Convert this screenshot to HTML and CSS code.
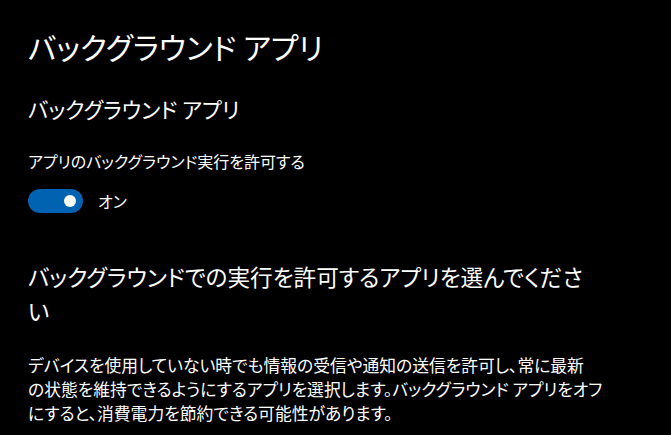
FILE: index.html
```html
<!DOCTYPE html>
<html lang="ja">
<head>
<meta charset="utf-8">
<link rel="stylesheet" href="styles.css">
</head>
<body>
<main class="page">
  <h1 class="page-title">バックグラウンド アプリ</h1>
  <h2 class="section-title">バックグラウンド アプリ</h2>
  <p class="setting-label">アプリのバックグラウンド実行を許可する</p>
  <div class="toggle-row">
    <span class="toggle"><span class="knob"></span></span>
    <span class="toggle-text">オン</span>
  </div>
  <h3 class="group-title">バックグラウンドでの実行を許可するアプリを選んでください</h3>
  <p class="description">デバイスを使用していない時でも情報の受信や通知の送信を許可し、常に最新<br>の状態を維持できるようにするアプリを選択します。バックグラウンド アプリをオフ<br>にすると、消費電力を節約できる可能性があります。</p>
</main>
</body>
</html>
```
FILE: styles.css
```css
html, body {
  margin: 0;
  padding: 0;
  background: #000;
}
body {
  color: #fff;
  font-family: "Noto Sans CJK JP", "Noto Sans", sans-serif;
  font-feature-settings: "palt";
}
.page {
  padding: 26px 0 0 28px;
  display: flex;
  flex-direction: column;
  align-items: flex-start;
}
.page-title {
  margin: 0;
  font-size: 30px;
  font-weight: 400;
  line-height: 40px;
}
.section-title {
  margin: 29px 0 0;
  font-size: 21.5px;
  font-weight: 400;
  line-height: 28px;
}
.setting-label {
  margin: 27px 0 0;
  font-size: 16px;
  line-height: 22px;
}
.toggle-row {
  margin-top: 17px;
  display: flex;
  align-items: center;
  gap: 15px;
}
.toggle {
  width: 55px;
  height: 24px;
  border-radius: 12px;
  background: #0063b1;
  display: flex;
  align-items: center;
  justify-content: flex-end;
  padding-right: 7px;
  box-sizing: border-box;
}
.knob {
  width: 12px;
  height: 12px;
  border-radius: 50%;
  background: #fff;
}
.toggle-text {
  font-size: 16px;
  line-height: 22px;
}
.group-title {
  margin: 47px 0 0;
  width: 570px;
  font-size: 22.6px;
  font-weight: 400;
  line-height: 34px;
}
.description {
  margin: 25px 0 0;
  width: 600px;
  font-size: 16.8px;
  line-height: 24px;
}
```
